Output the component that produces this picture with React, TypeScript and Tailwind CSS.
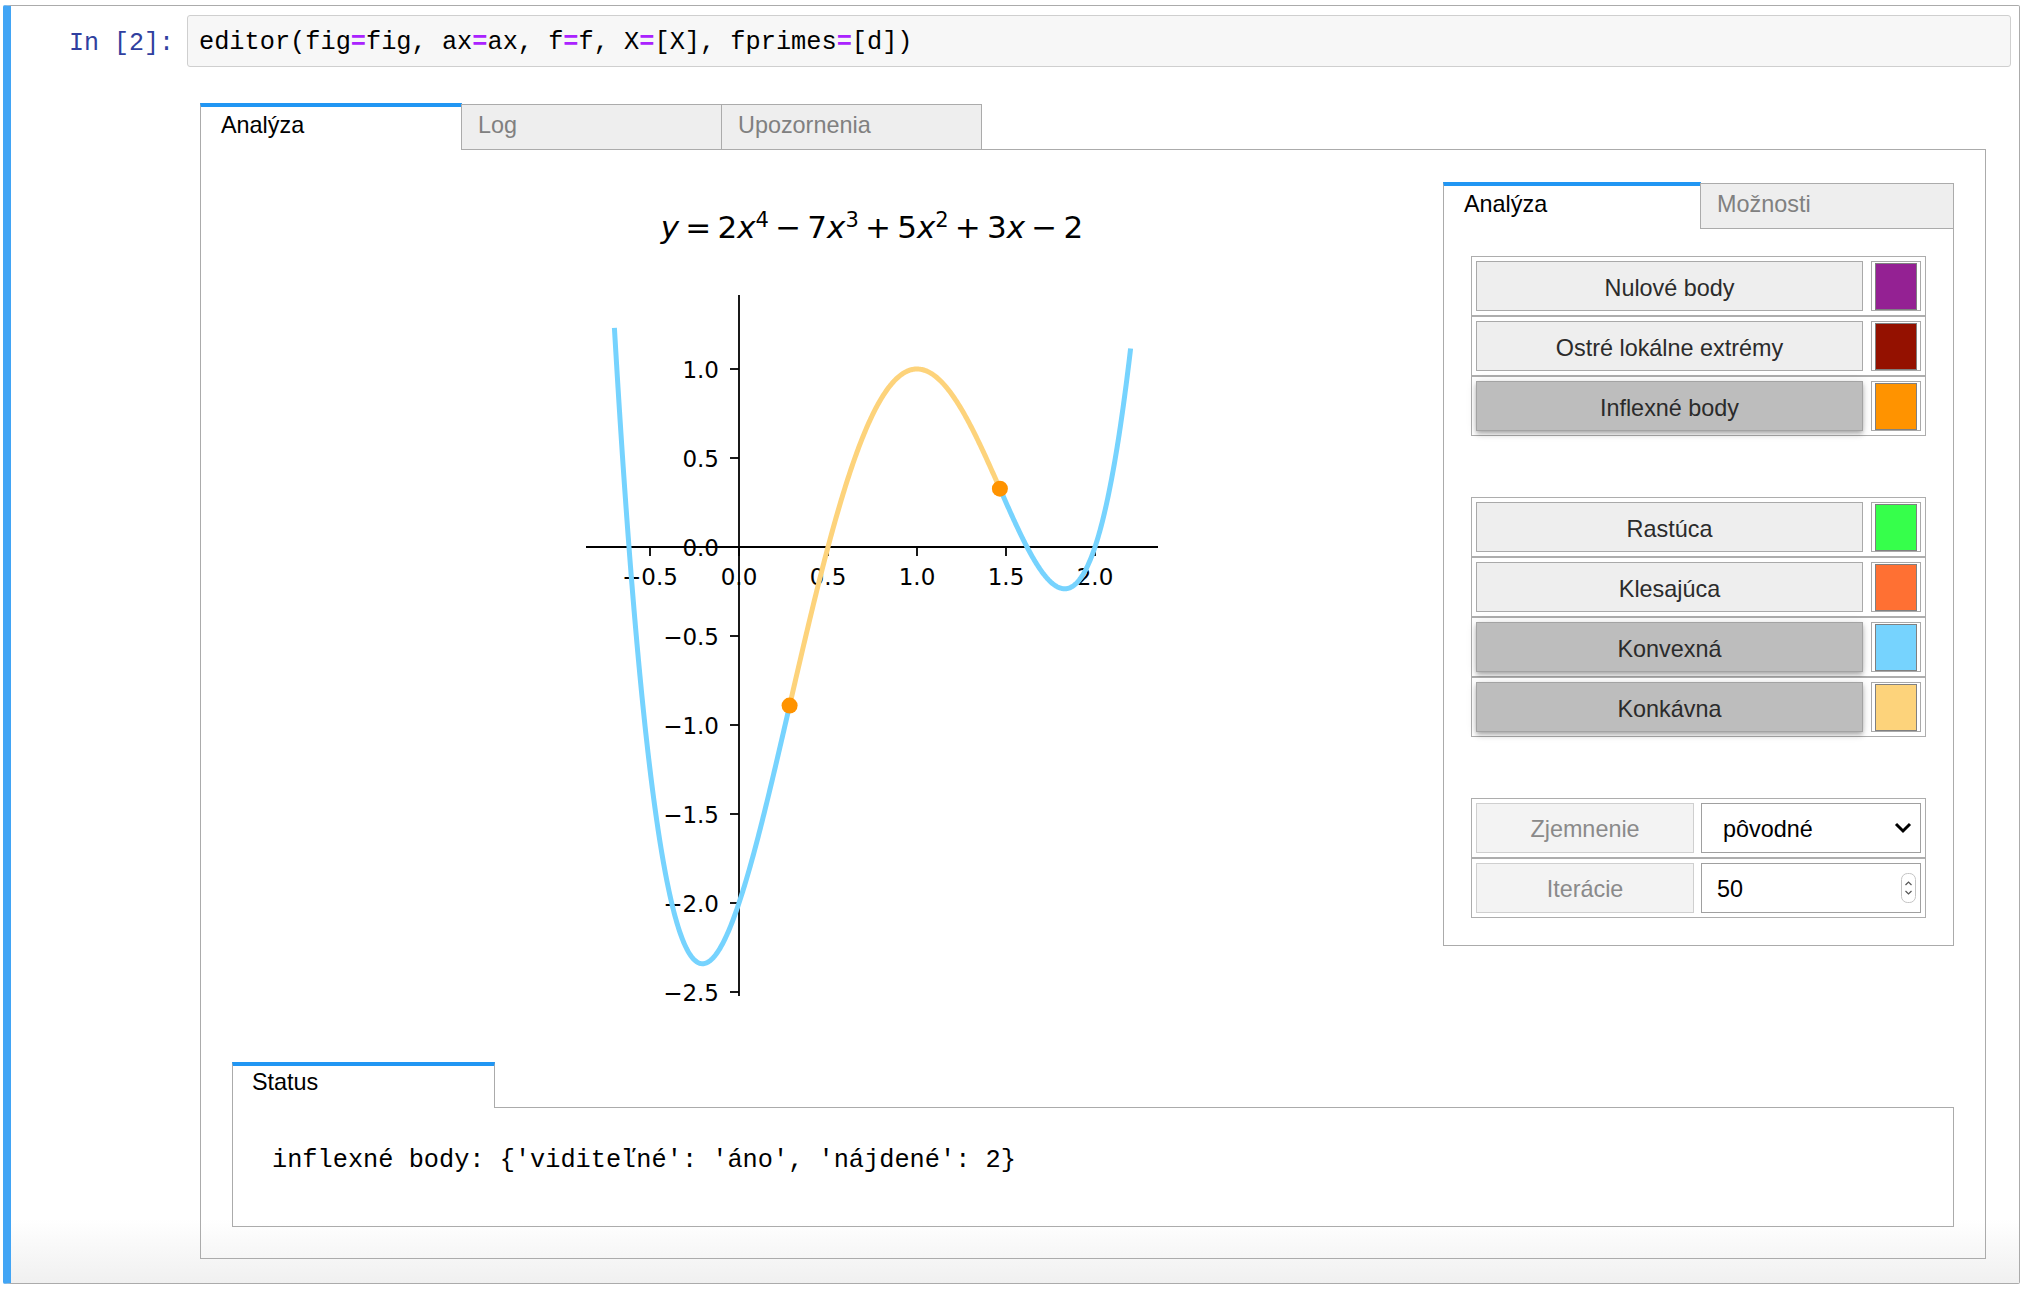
import React from "react";

const f = (x: number) => 2 * x ** 4 - 7 * x ** 3 + 5 * x ** 2 + 3 * x - 2;
const X0 = 740;
const Y0 = 548;
const U = 178;
const px = (x: number) => X0 + U * x;
const py = (y: number) => Y0 - U * y;
const I1 = (42 - Math.sqrt(804)) / 48;
const I2 = (42 + Math.sqrt(804)) / 48;

function curve(a: number, b: number) {
  const n = 240;
  let d = "";
  for (let i = 0; i <= n; i++) {
    const x = a + ((b - a) * i) / n;
    d += (i ? "L" : "M") + px(x).toFixed(2) + " " + py(f(x)).toFixed(2);
  }
  return d;
}

const BLUE = "#76d3fe";
const ORANGE_L = "#fdd37b";

function Plot() {
  const xt = [-0.5, 0, 0.5, 1, 1.5, 2];
  const yt = [1, 0.5, 0, -0.5, -1, -1.5, -2, -2.5];
  const fmt = (v: number) => (v < 0 ? "\u2212" : "") + Math.abs(v).toFixed(1);
  const T = "\u2009";
  return (
    <svg width={640} height={850} viewBox="560 182 640 850" className="ml-[327px] shrink-0">
      <text x={873} y={239} textAnchor="middle" fontSize={31} fontFamily="DejaVu Sans" fill="#000">
        <tspan fontStyle="italic">y</tspan>
        <tspan>{T}={T}2</tspan>
        <tspan fontStyle="italic">x</tspan>
        <tspan fontSize={21} dy={-11}>4</tspan>
        <tspan dy={11}>{T}−{T}7</tspan>
        <tspan fontStyle="italic">x</tspan>
        <tspan fontSize={21} dy={-11}>3</tspan>
        <tspan dy={11}>{T}+{T}5</tspan>
        <tspan fontStyle="italic">x</tspan>
        <tspan fontSize={21} dy={-11}>2</tspan>
        <tspan dy={11}>{T}+{T}3</tspan>
        <tspan fontStyle="italic">x</tspan>
        <tspan>{T}−{T}2</tspan>
      </text>
      <g stroke="#000" strokeWidth={1.8}>
        <line x1={740} y1={296} x2={740} y2={997} />
        <line x1={587} y1={Y0} x2={1159} y2={Y0} />
        {yt.map((v) => (
          <line key={"yt" + v} x1={731} y1={py(v)} x2={740} y2={py(v)} />
        ))}
        {xt.map((v) => (
          <line key={"xt" + v} x1={px(v)} y1={Y0} x2={px(v)} y2={Y0 + 9} />
        ))}
      </g>
      <g fontFamily="DejaVu Sans" fontSize={23} fill="#000">
        {yt.map((v) => (
          <text key={"yl" + v} x={720} y={py(v) + 9} textAnchor="end">
            {fmt(v)}
          </text>
        ))}
        {xt.map((v) => (
          <text key={"xl" + v} x={px(v)} y={586} textAnchor="middle">
            {fmt(v)}
          </text>
        ))}
      </g>
      <g fill="none" strokeWidth={5} strokeLinejoin="round">
        <path d={curve(-0.7, I1)} stroke={BLUE} />
        <path d={curve(I2, 2.2)} stroke={BLUE} />
        <path d={curve(I1, I2)} stroke={ORANGE_L} />
      </g>
      <circle cx={px(I1)} cy={py(f(I1))} r={8} fill="#ff9300" />
      <circle cx={px(I2)} cy={py(f(I2))} r={8} fill="#ff9300" />
    </svg>
  );
}

function ToggleRow({ label, color, active }: { label: string; color: string; active?: boolean }) {
  return (
    <div className="flex gap-[8px] border border-[#adadad] bg-white p-[4px]">
      <div
        className={
          "flex h-[50px] flex-1 items-center justify-center border pt-[5px] text-[23.4px] text-[#2b2b2b] " +
          (active
            ? "border-[#a3a3a3] bg-[#bdbdbd] shadow-[0_4px_5px_0_rgba(0,0,0,0.14),0_1px_10px_0_rgba(0,0,0,0.12),0_2px_4px_-1px_rgba(0,0,0,0.2)]"
            : "border-[#a9a9a9] bg-[#eeeeee]")
        }
      >
        {label}
      </div>
      <div className="flex h-[50px] w-[50px] items-center justify-center border border-[#a9a9a9] bg-white">
        <div className="h-[47px] w-[42px] border border-[#808080]" style={{ backgroundColor: color }} />
      </div>
    </div>
  );
}

function Group({ children }: { children: React.ReactNode }) {
  return <div className="flex flex-col">{children}</div>;
}

export default function App() {
  const codeParts = ["editor(fig", "=", "fig, ax", "=", "ax, f", "=", "f, X", "=", "[X], fprimes", "=", "[d])"];
  return (
    <div className="min-h-[1290px] bg-white pl-[3px] pr-[4px] pt-[5px] font-['Liberation_Sans',Arial,sans-serif]">
      <div className="h-[1279px] rounded-[2px] border border-l-[8px] border-[#ababab] border-l-[#42a5f5] bg-[linear-gradient(180deg,#ffffff_0%,#ffffff_95%,#f0f0f0_100%)] pt-[9px]">
        <div className="flex items-center">
          <div className="w-[176px] shrink-0 pr-[13px] pt-[5px] text-right font-['Liberation_Mono',monospace] text-[25px] text-[#303f9f]">
            In&nbsp;[2]:
          </div>
          <div className="mr-[8px] flex h-[52px] flex-1 items-center whitespace-pre rounded-[3px] border border-[#cfcfcf] bg-[#f7f7f7] pl-[11px] pt-[4px] font-['Liberation_Mono',monospace] text-[25.3px] text-black">
            {codeParts.map((p, i) =>
              p === "=" ? (
                <span key={i} className="font-bold text-[#aa22ff]">
                  =
                </span>
              ) : (
                <span key={i}>{p}</span>
              )
            )}
          </div>
        </div>

        <div className="ml-[189px] mr-[33px] mt-[36px]">
          <div className="relative z-10 flex items-end">
            <div className="-mb-px h-[47px] w-[262px] border-x border-t-[4px] border-x-[#ababab] border-t-[#2196f3] bg-white pl-[20px] pt-[5px] text-[23.4px] leading-[26px] text-black">
              Analýza
            </div>
            <div className="-ml-px h-[45px] w-[261px] border border-b-0 border-[#ababab] bg-[#eeeeee] pl-[16px] pt-[7px] text-[23.4px] leading-[26px] text-[#808080]">
              Log
            </div>
            <div className="-ml-px h-[45px] w-[261px] border border-b-0 border-[#ababab] bg-[#eeeeee] pl-[16px] pt-[7px] text-[23.4px] leading-[26px] text-[#808080]">
              Upozornenia
            </div>
          </div>
          <div className="flex flex-col gap-[31px] border border-[#ababab] p-[31px]">
            <div className="flex items-start">
              <Plot />
              <div className="ml-auto mt-[1px] w-[511px] shrink-0">
                <div className="relative z-10 flex items-end">
                  <div className="-mb-px h-[47px] w-[258px] border-x border-t-[4px] border-x-[#ababab] border-t-[#2196f3] bg-white pl-[20px] pt-[5px] text-[23.4px] leading-[26px] text-black">
                    Analýza
                  </div>
                  <div className="-ml-px h-[45px] flex-1 border border-b-0 border-[#ababab] bg-[#eeeeee] pl-[16px] pt-[7px] text-[23.4px] leading-[26px] text-[#808080]">
                    Možnosti
                  </div>
                </div>
                <div className="flex flex-col gap-[61px] border border-[#ababab] p-[27px]">
                  <Group>
                    <ToggleRow label="Nulové body" color="#942193" />
                    <ToggleRow label="Ostré lokálne extrémy" color="#941100" />
                    <ToggleRow label="Inflexné body" color="#ff9300" active />
                  </Group>
                  <Group>
                    <ToggleRow label="Rastúca" color="#36ff4b" />
                    <ToggleRow label="Klesajúca" color="#ff7033" />
                    <ToggleRow label="Konvexná" color="#76d3fe" active />
                    <ToggleRow label="Konkávna" color="#fdd37b" active />
                  </Group>
                  <Group>
                    <div className="flex gap-[7px] border border-[#adadad] p-[4px]">
                      <div className="flex h-[50px] w-[218px] items-center justify-center border border-[#cfcfcf] bg-[#f3f3f3] pt-[3px] text-[23.4px] text-[#8a8a8a]">
                        Zjemnenie
                      </div>
                      <div className="flex h-[50px] flex-1 items-center justify-between border border-[#a0a0a0] bg-white pl-[21px] pr-[8px] text-[23.4px] text-black">
                        <span className="pt-[3px]">pôvodné</span>
                        <svg width="18" height="12" viewBox="0 0 18 12">
                          <path d="M2 2 L9 9 L16 2" fill="none" stroke="#000" strokeWidth="3" />
                        </svg>
                      </div>
                    </div>
                    <div className="flex gap-[7px] border border-[#adadad] p-[4px]">
                      <div className="flex h-[50px] w-[218px] items-center justify-center border border-[#cfcfcf] bg-[#f3f3f3] pt-[3px] text-[23.4px] text-[#8a8a8a]">
                        Iterácie
                      </div>
                      <div className="flex h-[50px] flex-1 items-center justify-between border border-[#a0a0a0] bg-white pl-[15px] pr-[4px] text-[23.4px] text-black">
                        <span className="pt-[3px]">50</span>
                        <svg width="15" height="30" viewBox="0 0 15 30">
                          <rect x="0.5" y="0.5" width="14" height="29" rx="6" fill="#fff" stroke="#c4c4c4" />
                          <path d="M4.5 12 L7.5 9 L10.5 12" fill="none" stroke="#555" strokeWidth="1.2" />
                          <path d="M4.5 18 L7.5 21 L10.5 18" fill="none" stroke="#555" strokeWidth="1.2" />
                        </svg>
                      </div>
                    </div>
                  </Group>
                </div>
              </div>
            </div>

            <div>
              <div className="relative z-10 flex">
                <div className="-mb-px h-[46px] w-[263px] border-x border-t-[4px] border-x-[#ababab] border-t-[#2196f3] bg-white pl-[19px] pt-[3px] text-[23.4px] leading-[26px] text-black">
                  Status
                </div>
              </div>
              <div className="flex h-[120px] items-center whitespace-pre border border-[#ababab] pb-[12px] pl-[39px] font-['Liberation_Mono',monospace] text-[25.3px] text-black">
                {"inflexné body: {'viditeľné': 'áno', 'nájdené': 2}"}
              </div>
            </div>
          </div>
        </div>
      </div>
    </div>
  );
}
